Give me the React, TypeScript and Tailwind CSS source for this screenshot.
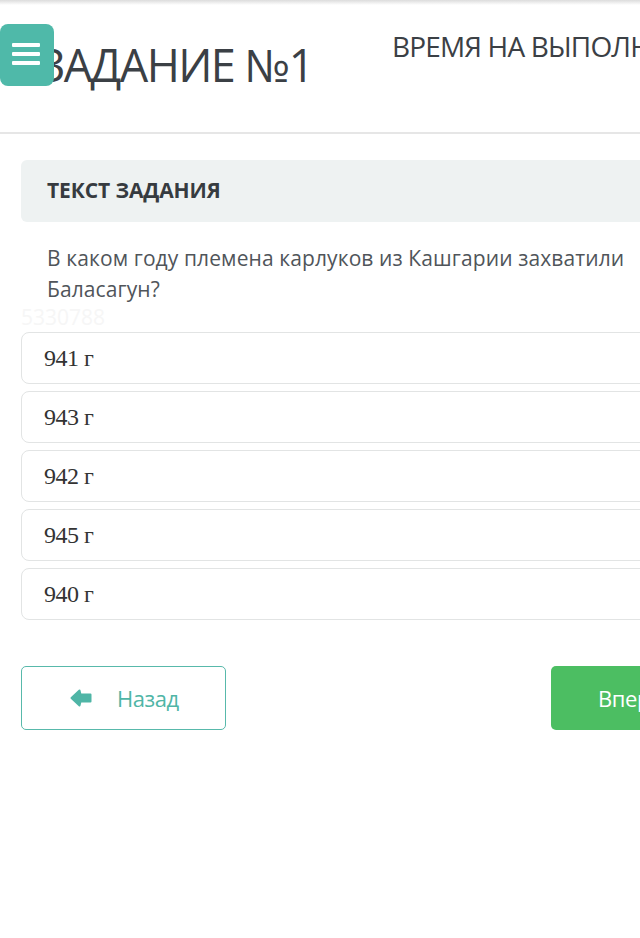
import React from 'react';

const options = ['941 г', '943 г', '942 г', '945 г', '940 г'];

const MenuButton: React.FC = () => (
  <button className="absolute left-0 top-[19px] w-[54px] h-[62px] bg-[#4fb9a9] rounded-lg flex flex-col items-center justify-center gap-[5px] pr-[3px] pb-[3px]">
    <span className="block w-[28px] h-[4px] bg-white rounded-[1px]" />
    <span className="block w-[28px] h-[4px] bg-white rounded-[1px]" />
    <span className="block w-[28px] h-[4px] bg-white rounded-[1px]" />
  </button>
);

const ArrowLeft: React.FC = () => (
  <svg viewBox="0 0 22 18" className="w-[22px] h-[18px]" fill="currentColor" stroke="currentColor" strokeLinejoin="round" strokeWidth={2}>
    <path d="M1.5 9 L9.5 1.5 L10.5 5.5 L20.5 5.5 L20.5 12.5 L10.5 12.5 L9.5 16.5 Z" />
  </svg>
);

export default function App() {
  return (
    <div className="w-[640px] h-[938px] bg-white overflow-hidden relative font-['Open_Sans',sans-serif]">
      {/* тень сверху */}
      <div className="h-[5px] bg-gradient-to-b from-[#dcdcdc] to-white" />

      {/* Заголовок */}
      <header className="relative h-[129px] border-b-2 border-[#e6e6e6] flex items-start">
        <h1 className="ml-[39px] mt-[37px] w-[353px] shrink-0 text-[45px] leading-none text-[#3b4045] tracking-[-0.035em] whitespace-nowrap">
          ЗАДАНИЕ №1
        </h1>
        <div className="mt-[27px] text-[28px] leading-none text-[#3b4045] tracking-[-0.03em] whitespace-nowrap">
          ВРЕМЯ НА ВЫПОЛНЕНИЕ
        </div>
        <MenuButton />
      </header>

      <main className="pl-[21px] pt-[26px]">
        <div className="w-[700px]">
          {/* Текст задания */}
          <div className="h-[62px] bg-[#eef2f2] rounded-md flex items-center px-[26px]">
            <span className="text-[21px] font-bold text-[#363b40] tracking-[-0.005em]">ТЕКСТ ЗАДАНИЯ</span>
          </div>

          <p className="mt-[21px] pl-[26px] w-[640px] text-[21px] leading-[31px] text-[#50555a] tracking-[0.005em]">
            В каком году племена карлуков из Кашгарии захватили Баласагун?
          </p>

          <div className="h-[27px] text-[21px] leading-[25px] text-[#f6f6f6] overflow-visible">5330788</div>

          {/* Варианты ответа */}
          <div className="flex flex-col gap-[7px]">
            {options.map((o) => (
              <div
                key={o}
                className="h-[52px] border border-[#e2e4e4] rounded-lg flex items-center pl-[22px] font-['Liberation_Serif',serif] text-[24px] text-[#333] tracking-[-0.02em]"
              >
                {o}
              </div>
            ))}
          </div>

          {/* Кнопки */}
          <div className="mt-[46px] flex items-start">
            <button className="w-[205px] h-[64px] border border-[#58b9ab] rounded-[5px] flex items-center pl-[48px] text-[#4fb5a6]">
              <ArrowLeft />
              <span className="ml-[25px] text-[22px] tracking-[-0.02em]">Назад</span>
            </button>
            <button className="ml-[325px] w-[160px] h-[64px] bg-[#4cbe62] rounded-[5px] flex items-center pl-[47px] text-white">
              <span className="text-[22px] tracking-[-0.02em]">Вперед</span>
            </button>
          </div>
        </div>
      </main>
    </div>
  );
}
